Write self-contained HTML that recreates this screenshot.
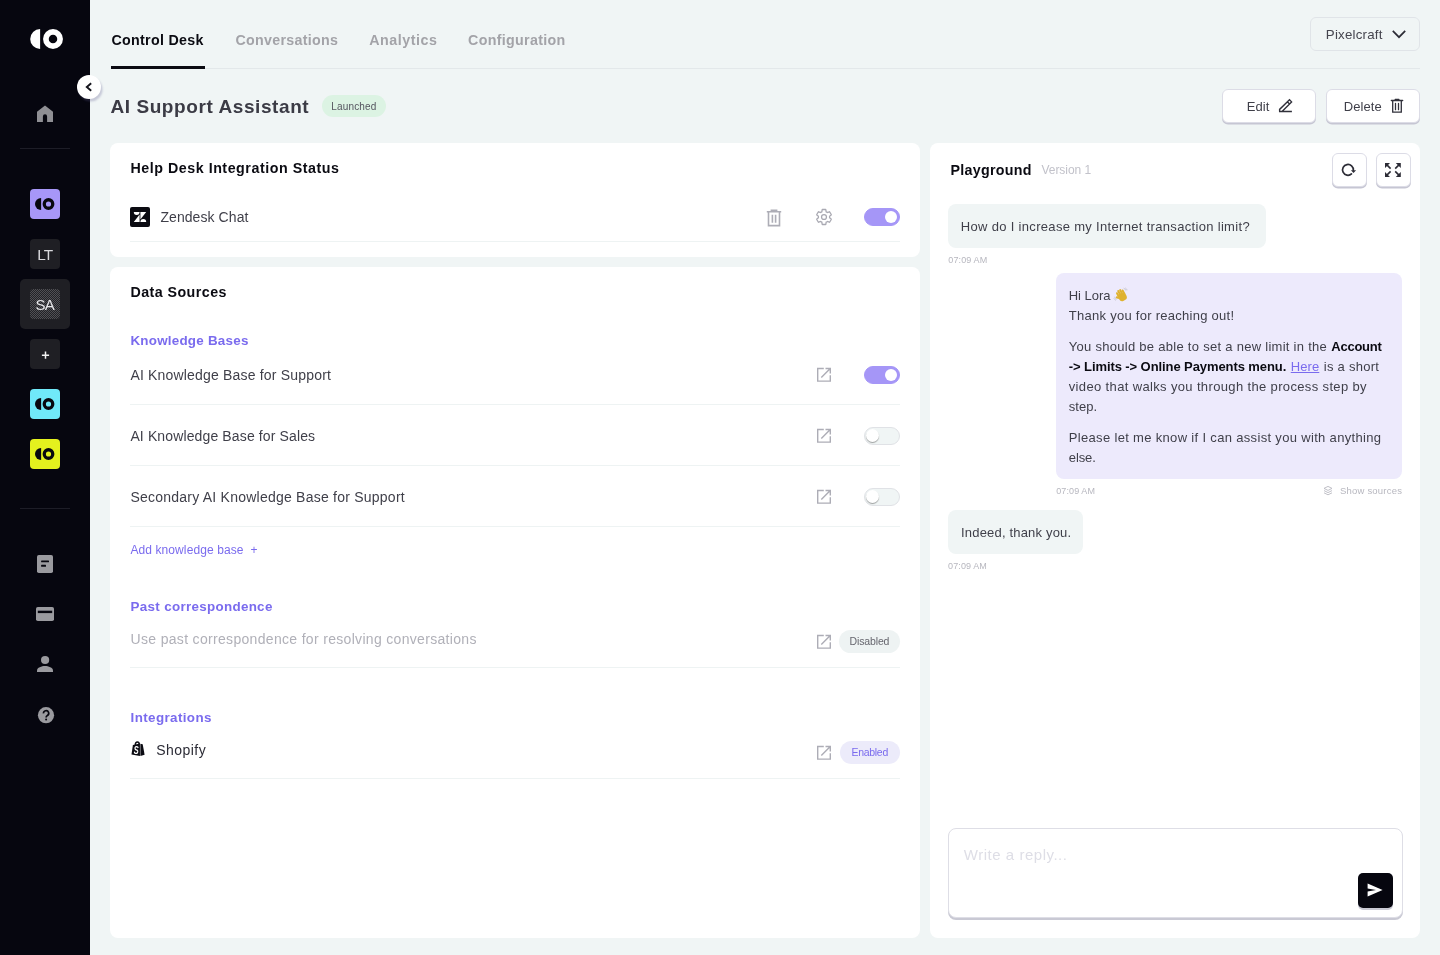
<!DOCTYPE html>
<html lang="en">
<head>
<meta charset="utf-8">
<title>Control Desk</title>
<style>
*{box-sizing:border-box;margin:0;padding:0}
html,body{width:1440px;height:955px;overflow:hidden}
body{font-family:"Liberation Sans",sans-serif;background:#f0f5f5;color:#3a3a44;position:relative}
#wrap{position:absolute;left:0;top:0;width:1440px;height:955px;will-change:transform}
.abs{position:absolute}
.t{position:absolute;white-space:nowrap;line-height:1}
/* sidebar */
#side{position:absolute;left:0;top:0;width:90px;height:955px;background:#06060f}
.sdiv{position:absolute;left:20px;width:50px;height:1px;background:#1d1d27}
.sq{position:absolute;left:30px;width:30px;height:30px;border-radius:4px}
.sqt{color:#d6d6da;font-size:15px;text-align:center;line-height:30px}
/* top */
.tab{font-size:15px;font-weight:bold;color:#a3a3a8;top:32px}
.card{position:absolute;background:#fff;border-radius:8px}
.btn{position:absolute;background:#fff;border:1px solid #dcdce6;border-radius:6px;box-shadow:0 1.5px 0 #c6c6d3}
.hr{position:absolute;height:1px;background:#eef3f3}
.purple{color:#7a6bee}
.row{font-size:14.5px;color:#3f3f49}

.tog{position:absolute;width:36px;height:18px;border-radius:9px;background:#f0f5f5;border:1px solid #e0e2e6}
.tog i{position:absolute;left:1px;top:1px;width:13px;height:13px;border-radius:50%;background:#fff;box-shadow:0 1px 1px rgba(0,0,0,.35)}
.tog.on{background:#a596f7;border-color:#a596f7}
.tog.on i{left:auto;right:2px;top:2px;width:12px;height:12px;box-shadow:none}

.bub{position:absolute;border-radius:8px}
.msg{font-size:13.5px;color:#3f3f49}
.msg b{color:#0b0b12}
.ts{font-size:9px;color:#b7b7bf}
</style>
</head>
<body>
<div id="wrap">

<!-- ============ SIDEBAR ============ -->
<div id="side">
  <!-- logo -->
  <svg class="abs" style="left:28px;top:27px" width="38" height="24" viewBox="0 0 38 24">
    <path d="M12.1 2.1 A9.9 9.9 0 0 0 12.1 21.9 Z" fill="#fff"/>
    <circle cx="25" cy="12" r="7.1" fill="none" stroke="#fff" stroke-width="5.7"/>
  </svg>
  <!-- home -->
  <svg class="abs" style="left:36px;top:104px" width="18" height="20" viewBox="0 0 18 20">
    <path d="M9 1.6 L1 7.8 V18 H6.9 V12.4 A2.1 2.1 0 0 1 11.1 12.4 V18 H17 V7.8 Z" fill="#8f8f94"/>
  </svg>
  <div class="sdiv" style="top:148px"></div>

  <div class="sq" style="top:189px;background:#a797f8"><svg width="30" height="30" viewBox="0 0 30 30"><path d="M11.1 8.9 A6.1 6.1 0 0 0 11.1 21.1 Z" fill="#08080f"/><circle cx="18.5" cy="15" r="4.25" fill="none" stroke="#08080f" stroke-width="3.3"/></svg></div>
  <div class="sq" style="top:239px;background:#1f1f24"></div>
  <div class="t" id="lt" style="left:37.3px;top:247.4px;font-size:15.4px;color:#d9d9dd;letter-spacing:-1px">LT</div>
  <div class="abs" style="left:20px;top:279px;width:50px;height:50px;border-radius:5px;background:#1f1f24"></div>
  <div class="sq" style="top:289px;background:repeating-conic-gradient(#505054 0 25%,#222227 0 50%) 0 0/2px 2px"></div>
  <div class="t" id="sa" style="left:35.4px;top:297.3px;font-size:15px;color:#e6e6e9;letter-spacing:-0.7px">SA</div>
  <div class="sq" style="top:339px;background:#1f1f24"></div>
  <svg class="abs" style="left:41px;top:351px" width="9" height="9" viewBox="0 0 9 9"><path d="M0.9 4.2 H8.1 M4.5 0.6 V7.8" stroke="#f2f2f2" stroke-width="1.5" fill="none"/></svg>
  <div class="sq" style="top:389px;background:#70e9f9"><svg width="30" height="30" viewBox="0 0 30 30"><path d="M11.1 8.9 A6.1 6.1 0 0 0 11.1 21.1 Z" fill="#08080f"/><circle cx="18.5" cy="15" r="4.25" fill="none" stroke="#08080f" stroke-width="3.3"/></svg></div>
  <div class="sq" style="top:439px;background:#e4f11e"><svg width="30" height="30" viewBox="0 0 30 30"><path d="M11.1 8.9 A6.1 6.1 0 0 0 11.1 21.1 Z" fill="#08080f"/><circle cx="18.5" cy="15" r="4.25" fill="none" stroke="#08080f" stroke-width="3.3"/></svg></div>
  <div class="sdiv" style="top:508px"></div>

  <!-- doc icon -->
  <svg class="abs" style="left:36px;top:554px" width="18" height="20" viewBox="0 0 18 20">
    <rect x="1" y="1" width="16" height="18" rx="1.8" fill="#9a9a9f"/>
    <rect x="5.1" y="6.4" width="7.9" height="1.9" rx=".5" fill="#06060f"/>
    <rect x="5.1" y="10.8" width="4.9" height="1.9" rx=".5" fill="#06060f"/>
  </svg>
  <!-- card icon -->
  <svg class="abs" style="left:35px;top:606px" width="20" height="16" viewBox="0 0 20 16">
    <rect x="1" y="1" width="18" height="14" rx="1.8" fill="#9a9a9f"/>
    <rect x="2.8" y="4.7" width="14.4" height="2.4" fill="#06060f"/>
  </svg>
  <!-- person -->
  <svg class="abs" style="left:36px;top:655px" width="18" height="18" viewBox="0 0 18 18">
    <circle cx="9.1" cy="5" r="4.1" fill="#9a9a9f"/>
    <path d="M1 17 V15.4 C1 12.6 5.6 11 9 11 C12.4 11 17 12.6 17 15.4 V17 Z" fill="#9a9a9f"/>
  </svg>
  <!-- help -->
  <svg class="abs" style="left:37px;top:706px" width="18" height="19" viewBox="0 0 18 19">
    <circle cx="9" cy="9.2" r="8.1" fill="#9a9a9f"/>
    <path d="M6.5 7.4 A2.6 2.6 0 1 1 10.4 9.5 C9.4 10.1 9.1 10.5 9.1 11.5" fill="none" stroke="#06060f" stroke-width="1.7"/>
    <circle cx="9.1" cy="13.6" r="1" fill="#06060f"/>
  </svg>
</div>

<!-- collapse button -->
<div class="abs" style="left:77px;top:75px;width:24px;height:24px;border-radius:50%;background:#fff;box-shadow:1.5px 2.5px 2px rgba(90,85,140,.28)"></div>
<svg class="abs" style="left:77px;top:75px" width="24" height="24" viewBox="0 0 24 24"><path d="M14.2 8.2 L9.8 12 L14.2 15.8" fill="none" stroke="#14141c" stroke-width="1.9"/></svg>

<!-- ============ TOP TABS ============ -->
<div class="t tab" id="t1" style="left:111.40px;color:#0b0b12;top:33px;font-size:14.25px;letter-spacing:0.314px">Control Desk</div>
<div class="t tab" id="t2" style="left:235.40px;top:33px;font-size:14.25px;letter-spacing:0.296px">Conversations</div>
<div class="t tab" id="t3" style="left:369.20px;top:33px;font-size:14.25px;letter-spacing:0.556px">Analytics</div>
<div class="t tab" id="t4" style="left:468.10px;top:33px;font-size:14.25px;letter-spacing:0.311px">Configuration</div>
<div class="abs" style="left:111px;top:68px;width:1309px;height:1px;background:#e3e8ea"></div>
<div class="abs" style="left:111px;top:66px;width:94px;height:3px;background:#0b0b12"></div>

<!-- Pixelcraft dropdown -->
<div class="abs" style="left:1310px;top:17px;width:110px;height:34px;border:1px solid #e0e4e8;border-radius:6px"></div>
<div class="t" id="px" style="color:#45454f;left:1325.80px;top:28px;font-size:13.3px;letter-spacing:0.212px">Pixelcraft</div>
<svg class="abs" style="left:1391px;top:28px" width="16" height="12" viewBox="0 0 16 12"><path d="M1.8 2.8 L8 9.2 L14.2 2.8" fill="none" stroke="#2c2c36" stroke-width="1.7"/></svg>

<!-- Title -->
<div class="t" id="title" style="font-weight:bold;color:#3b3b45;left:110.40px;top:97px;font-size:19px;letter-spacing:0.584px">AI Support Assistant</div>
<div class="abs" style="left:322px;top:95px;width:64px;height:22px;border-radius:11px;background:#dcf3e3"></div>
<div class="t" id="lau" style="color:#55555f;left:331.20px;top:102px;font-size:10px;letter-spacing:0.182px">Launched</div>

<!-- Edit / Delete -->
<div class="btn" style="left:1222px;top:89px;width:94px;height:34px"></div>
<div class="t" id="edit" style="color:#3f3f49;left:1246.70px;top:100px;font-size:13px;letter-spacing:0.112px">Edit</div>
<svg class="abs" style="left:1277px;top:97px" width="18" height="18" viewBox="0 0 18 18"><path d="M2.6 14.5 V12.4 L12.5 2.7 L14.6 4.9 L5.3 14.3 M10.4 4.8 L12.5 7 M2 14.5 H14.9" fill="none" stroke="#30303a" stroke-width="1.35"/></svg>
<div class="btn" style="left:1326px;top:89px;width:94px;height:34px"></div>
<div class="t" id="del" style="color:#3f3f49;left:1343.70px;top:100px;font-size:13px;letter-spacing:0.077px">Delete</div>
<svg class="abs" style="left:1389px;top:97px" width="16" height="18" viewBox="0 0 16 18"><path d="M2.3 3.5 H13.7 M6.2 2.5 H9.9 M3.7 3.5 V15.05 H12.3 V3.5 M6.5 6.4 V12.7 M9.5 6.4 V12.7" fill="none" stroke="#30303a" stroke-width="1.3" stroke-linecap="round"/></svg>

<!-- ============ CARDS ============ -->
<div class="card" style="left:110px;top:143px;width:810px;height:114px"></div>
<div class="card" style="left:110px;top:267px;width:810px;height:671px"></div>
<div class="card" style="left:930px;top:143px;width:490px;height:795px"></div>



<!-- Help desk card -->
<div class="t" id="h1" style="left:130.40px;top:161px;font-size:14.25px;font-weight:bold;color:#0b0b12;letter-spacing:0.538px">Help Desk Integration Status</div>
<div class="abs" style="left:130px;top:207px;width:20px;height:20px;border-radius:2px;background:#0b0b12"></div>
<svg class="abs" style="left:130px;top:207px" width="20" height="20" viewBox="0 0 20 20"><path d="M3.8 5 H9.6 A2.9 2.9 0 0 1 3.8 5 Z M9.6 7.6 V15 H3.8 Z M10.4 5 H16.2 L10.4 12.4 Z M10.4 15 A2.9 2.9 0 0 1 16.2 15 Z" fill="#fff"/></svg>
<div class="t row" id="zd" style="left:160.40px;top:210px;font-size:14px;letter-spacing:0.081px">Zendesk Chat</div>
<svg class="abs" style="left:766px;top:208.6px" width="16" height="18" viewBox="0 0 16 18"><path d="M.8 2.8 H15.2 M5.4 2.8 V1.3 H10.6 V2.8 M2.5 2.8 V16.6 H13.5 V2.8 M6.4 5.8 V13.8 M9.6 5.8 V13.8" fill="none" stroke="#adadb6" stroke-width="1.6"/></svg>
<svg class="abs" style="left:815px;top:208px" width="18" height="18" viewBox="0 0 24 24"><path d="M19.43 12.98c.04-.32.07-.64.07-.98s-.03-.66-.07-.98l2.11-1.65c.19-.15.24-.42.12-.64l-2-3.46a.5.5 0 0 0-.61-.22l-2.49 1a7.3 7.3 0 0 0-1.69-.98l-.38-2.65A.49.49 0 0 0 14 2h-4a.49.49 0 0 0-.49.42l-.38 2.65c-.61.25-1.17.59-1.69.98l-2.49-1a.5.5 0 0 0-.61.22l-2 3.46c-.13.22-.07.49.12.64l2.11 1.65c-.04.32-.07.65-.07.98s.03.66.07.98l-2.11 1.65c-.19.15-.24.42-.12.64l2 3.46c.12.22.39.3.61.22l2.49-1c.52.4 1.08.73 1.69.98l.38 2.65c.03.24.24.42.49.42h4c.25 0 .46-.18.49-.42l.38-2.65c.61-.25 1.17-.59 1.69-.98l2.49 1c.23.09.49 0 .61-.22l2-3.46c.12-.22.07-.49-.12-.64z" fill="none" stroke="#a9a9b2" stroke-width="1.7"/><circle cx="12" cy="12" r="3.3" fill="none" stroke="#a9a9b2" stroke-width="1.7"/></svg>
<div class="tog on" style="left:864px;top:208px"><i></i></div>
<div class="hr" style="left:130px;top:241px;width:770px"></div>

<!-- Data sources card -->
<div class="t" id="h2" style="left:130.40px;top:285px;font-size:14.25px;font-weight:bold;color:#0b0b12;letter-spacing:0.453px">Data Sources</div>
<div class="t purple" id="kb" style="left:130.40px;top:334px;font-size:13.4px;font-weight:bold;letter-spacing:0.241px">Knowledge Bases</div>

<div class="t row" id="r1" style="left:130.40px;top:368px;font-size:14px;letter-spacing:0.184px">AI Knowledge Base for Support</div>
<svg class="abs ext" style="left:816px;top:367px" width="16" height="16" viewBox="0 0 16 16"><g fill="none" stroke="#adadb6" stroke-width="1.4"><path d="M7.8 1.55 H1.7 V14.1 H14.3 V8.2"/><path d="M9.5 1.55 H14.3 V6.5 M5.3 10.6 L14 1.85"/></g></svg>
<div class="tog on" style="left:864px;top:365.5px"><i></i></div>
<div class="hr" style="left:130px;top:404px;width:770px"></div>

<div class="t row" id="r2" style="left:130.40px;top:429px;font-size:14px;letter-spacing:0.130px">AI Knowledge Base for Sales</div>
<svg class="abs ext" style="left:816px;top:428px" width="16" height="16" viewBox="0 0 16 16"><g fill="none" stroke="#adadb6" stroke-width="1.4"><path d="M7.8 1.55 H1.7 V14.1 H14.3 V8.2"/><path d="M9.5 1.55 H14.3 V6.5 M5.3 10.6 L14 1.85"/></g></svg>
<div class="tog" style="left:864px;top:426.5px"><i></i></div>
<div class="hr" style="left:130px;top:465px;width:770px"></div>

<div class="t row" id="r3" style="left:130.40px;top:490px;font-size:14px;letter-spacing:0.234px">Secondary AI Knowledge Base for Support</div>
<svg class="abs ext" style="left:816px;top:489px" width="16" height="16" viewBox="0 0 16 16"><g fill="none" stroke="#adadb6" stroke-width="1.4"><path d="M7.8 1.55 H1.7 V14.1 H14.3 V8.2"/><path d="M9.5 1.55 H14.3 V6.5 M5.3 10.6 L14 1.85"/></g></svg>
<div class="tog" style="left:864px;top:487.5px"><i></i></div>
<div class="hr" style="left:130px;top:526px;width:770px"></div>

<div class="t purple" id="add" style="left:130.40px;top:544px;font-size:12px;letter-spacing:0.098px">Add knowledge base &nbsp;+</div>

<div class="t purple" id="pc" style="left:130.60px;top:600px;font-size:13.4px;font-weight:bold;letter-spacing:0.308px">Past correspondence</div>
<div class="t row" id="use" style="left:130.60px;top:632px;color:#b0b0b8;font-size:14px;letter-spacing:0.318px">Use past correspondence for resolving conversations</div>
<svg class="abs ext" style="left:816px;top:634px" width="16" height="16" viewBox="0 0 16 16"><g fill="none" stroke="#adadb6" stroke-width="1.4"><path d="M7.8 1.55 H1.7 V14.1 H14.3 V8.2"/><path d="M9.5 1.55 H14.3 V6.5 M5.3 10.6 L14 1.85"/></g></svg>
<div class="abs" style="left:839px;top:630px;width:61px;height:23px;border-radius:12px;background:#eef3f3"></div>
<div class="t" id="dis" style="left:849.60px;top:636px;font-size:10.5px;color:#66666e;letter-spacing:-0.141px">Disabled</div>
<div class="hr" style="left:130px;top:667px;width:770px"></div>

<div class="t purple" id="int" style="left:130.60px;top:711px;font-size:13.4px;font-weight:bold;letter-spacing:0.379px">Integrations</div>
<svg class="abs" style="left:131px;top:740px" width="15" height="17" viewBox="0 0 15 17"><path d="M1.9 5 L8.95 3.6 V16.1 L.5 14.6 Z" fill="#0b0b12"/><path d="M9.35 3.8 L11.7 4.3 L13.6 14.7 L9.35 16 Z" fill="#0b0b12"/><path d="M4.3 5 C4.3 2.8 5.3 1.9 6.4 1.9 C7.5 1.9 8.2 2.8 8.3 4.2" fill="none" stroke="#0b0b12" stroke-width="1.5"/><g transform="translate(5.15 13.75) scale(.74 1)"><text x="0" y="0" text-anchor="middle" font-family="Liberation Sans" font-weight="bold" font-style="italic" font-size="10" fill="#fff">S</text></g></svg>
<div class="t row" id="shop" style="left:156.20px;top:743px;color:#2c2c36;font-size:14px;letter-spacing:0.476px">Shopify</div>
<svg class="abs ext" style="left:816px;top:745px" width="16" height="16" viewBox="0 0 16 16"><g fill="none" stroke="#adadb6" stroke-width="1.4"><path d="M7.8 1.55 H1.7 V14.1 H14.3 V8.2"/><path d="M9.5 1.55 H14.3 V6.5 M5.3 10.6 L14 1.85"/></g></svg>
<div class="abs" style="left:840px;top:741px;width:60px;height:23px;border-radius:12px;background:#ecebfa"></div>
<div class="t purple" id="ena" style="left:851.50px;top:747px;font-size:10.5px;letter-spacing:-0.300px">Enabled</div>
<div class="hr" style="left:130px;top:778px;width:770px"></div>


<div class="t" id="pg" style="left:950.60px;top:163px;font-size:14.25px;font-weight:bold;color:#0b0b12;letter-spacing:0.275px">Playground</div>
<div class="t" id="ver" style="left:1041.50px;top:164px;font-size:12px;color:#c2c2ca;letter-spacing:-0.053px">Version 1</div>
<div class="btn" style="left:1331.5px;top:153px;width:35px;height:34px"></div>
<svg class="abs" style="left:1339px;top:161px" width="19" height="18" viewBox="0 0 19 18"><path d="M14.35 9.3 A5.4 5.4 0 1 0 12.5 12.95" fill="none" stroke="#2c2c36" stroke-width="1.7" stroke-linecap="round"/><path d="M11.9 9.2 H17.1 L14.5 12.1 Z" fill="#2c2c36"/></svg>
<div class="btn" style="left:1375.5px;top:153px;width:35px;height:34px"></div>
<svg class="abs" style="left:1384px;top:161px" width="18" height="18" viewBox="0 0 18 18"><g fill="#2c2c36"><path d="M1 2 H6 L1 7 Z M11.8 2 H16.8 V7 Z M1 16 V11 L6 16 Z M16.8 16 H11.8 L16.8 11 Z"/></g><g fill="none" stroke="#2c2c36" stroke-width="1.6"><path d="M2.6 3.6 L6.6 7.6 M15.2 3.6 L11.2 7.6 M2.6 14.4 L6.6 10.4 M15.2 14.4 L11.2 10.4"/></g></svg>

<div class="bub" style="left:948px;top:204px;width:318px;height:44px;background:#f0f5f5"></div>
<div class="t msg" id="m1" style="left:960.80px;top:220px;font-size:13px;letter-spacing:0.319px">How do I increase my Internet transaction limit?</div>
<div class="t ts" id="ts1" style="left:948.30px;top:256px;font-size:9px;letter-spacing:0.116px">07:09 AM</div>

<div class="bub" style="left:1056px;top:273px;width:346px;height:206px;background:#edeafc"></div>
<div class="t msg" id="a1" style="left:1068.75px;top:289px;font-size:13px;letter-spacing:-0.026px">Hi Lora</div>
<svg class="abs" style="left:1113px;top:287px" width="17" height="16" viewBox="0 0 17 16"><g transform="rotate(-28 8.5 8.5)" fill="#dfb22f"><rect x="4.6" y="6.2" width="8.2" height="8" rx="3.4"/><rect x="4.6" y="3.4" width="2.1" height="6" rx="1"/><rect x="6.7" y="2" width="2.1" height="7" rx="1"/><rect x="8.8" y="2.2" width="2.1" height="7" rx="1"/><rect x="10.8" y="3.6" width="2" height="6" rx="1"/><rect x="2.2" y="7.6" width="5" height="2.3" rx="1.1" transform="rotate(38 4.6 8.8)"/></g><path d="M10.6 1.2 C11.8 1.6 12.6 2.4 13 3.6 M12.2 .9 C13.2 1.4 13.8 2.2 14.2 3.2" stroke="#bdbdc3" stroke-width=".7" fill="none"/><path d="M1.6 9.8 C1.9 11 2.6 11.8 3.6 12.3 M.8 11.2 C1.3 12.2 2 12.9 3 13.4" stroke="#bdbdc3" stroke-width=".7" fill="none"/></svg>
<div class="t msg" id="a2" style="left:1068.75px;top:309px;font-size:13px;letter-spacing:0.273px">Thank you for reaching out!</div>
<div class="t msg" id="a3" style="left:1068.75px;top:340px;font-size:13px;letter-spacing:0.282px">You should be able to set a new limit in the</div>
<div class="t msg" id="a3b" style="font-weight:bold;color:#0b0b12;left:1331.25px;top:340px;font-size:13px;letter-spacing:-0.231px">Account</div>
<div class="t msg" id="a4" style="font-weight:bold;color:#0b0b12;left:1068.75px;top:360px;font-size:13px;letter-spacing:-0.085px">-&gt; Limits -&gt; Online Payments menu.</div>
<div class="t msg purple" id="a4b" style="color:#7a6bee;text-decoration:underline;left:1290.75px;top:360px;font-size:13px;letter-spacing:0.089px">Here</div>
<div class="t msg" id="a4c" style="left:1323.75px;top:360px;font-size:13px;letter-spacing:0.263px">is a short</div>
<div class="t msg" id="a5" style="left:1068.75px;top:380px;font-size:13px;letter-spacing:0.356px">video that walks you through the process step by</div>
<div class="t msg" id="a6" style="left:1068.75px;top:400px;font-size:13px;letter-spacing:0.014px">step.</div>
<div class="t msg" id="a7" style="left:1068.75px;top:431px;font-size:13px;letter-spacing:0.329px">Please let me know if I can assist you with anything</div>
<div class="t msg" id="a8" style="left:1068.75px;top:451px;font-size:13px;letter-spacing:-0.104px">else.</div>
<div class="t ts" id="ts2" style="left:1056.25px;top:487px;font-size:9px;letter-spacing:0.096px">07:09 AM</div>
<svg class="abs" style="left:1322px;top:485px" width="12" height="12" viewBox="0 0 12 12"><g fill="none" stroke="#b9b9c1" stroke-width=".9"><path d="M6 1.4 L10 3.4 L6 5.4 L2 3.4 Z"/><path d="M2 5.6 L6 7.6 L10 5.6"/><path d="M2 7.8 L6 9.8 L10 7.8"/></g></svg>
<div class="t ts" id="ss" style="left:1340.00px;top:486px;font-size:9.5px;letter-spacing:0.202px">Show sources</div>

<div class="bub" style="left:948px;top:510px;width:135px;height:44px;background:#f0f5f5"></div>
<div class="t msg" id="m3" style="left:961.00px;top:526px;font-size:13px;letter-spacing:0.187px">Indeed, thank you.</div>
<div class="t ts" id="ts3" style="left:948.10px;top:562px;font-size:9px;letter-spacing:0.102px">07:09 AM</div>

<div class="abs" style="left:948px;top:828px;width:455px;height:90px;border:1px solid #dedee6;border-radius:8px;background:#fff;box-shadow:0 2px 0 #c9c9d4"></div>
<div class="t" id="ph" style="left:963.75px;top:847px;font-size:15px;color:#dedee6;letter-spacing:0.528px">Write a reply...</div>
<div class="abs" style="left:1358px;top:873px;width:35px;height:35px;border-radius:5px;background:#06060f;box-shadow:0 2px 0 #c9c9d4"></div>
<svg class="abs" style="left:1366px;top:882px" width="18" height="16" viewBox="0 0 18 16"><path d="M1.6 1.6 L16.6 8 L1.6 14.4 L1.6 9.6 L10 8 L1.6 6.4 Z" fill="#fff"/></svg>


</div>
</body>
</html>
